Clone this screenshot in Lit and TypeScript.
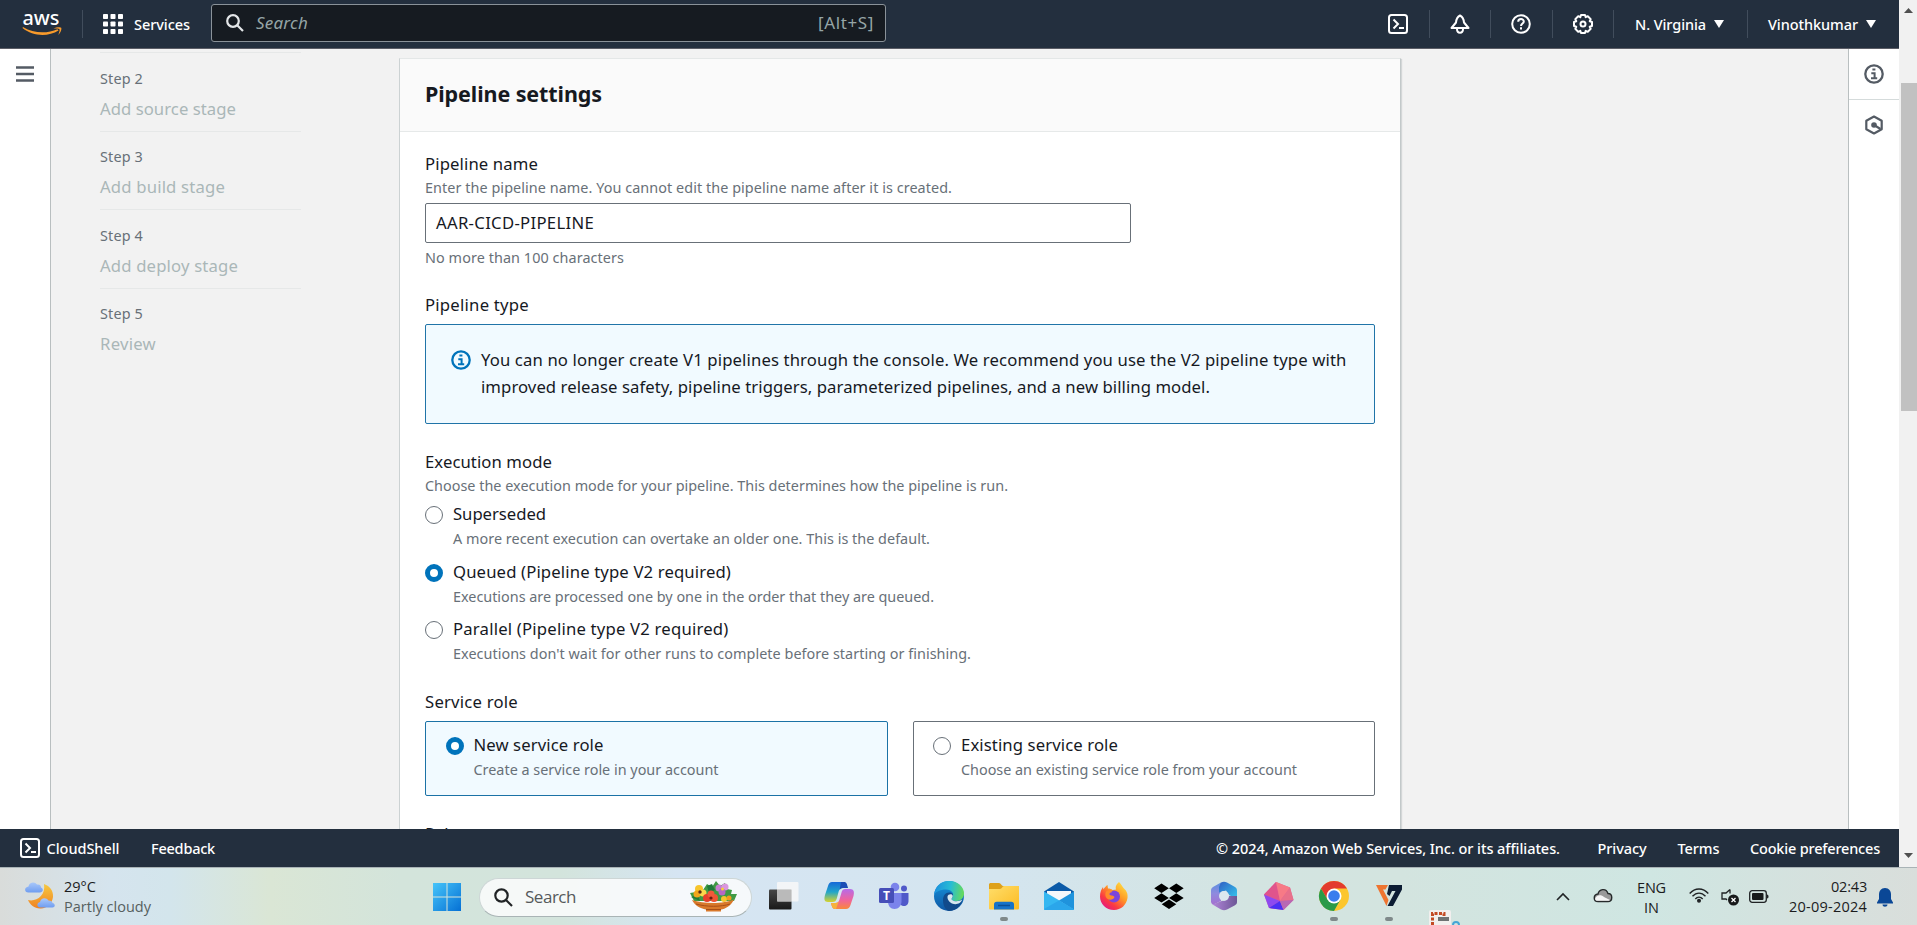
import { LitElement, html, css, svg, nothing } from "lit";
import { customElement, property, query } from "lit/decorators.js";

/** A single line of text whose tracking is tuned so that it spans a given width. */
@customElement("ui-text")
class UiText extends LitElement {
  static styles = css`
    :host { display: block; white-space: nowrap; }
    span { display: inline-block; }
  `;
  @property({ type: Number }) w = 0;
  @property() text = "";
  @query("span") private line!: HTMLSpanElement;

  updated() {
    this.line.style.letterSpacing = "0px";
    const natural = this.line.getBoundingClientRect().width;
    if (this.w && natural) {
      this.line.style.letterSpacing = `${(this.w - natural) / this.text.length}px`;
    }
  }
  render() {
    return html`<span>${this.text}</span>`;
  }
}

const t = (text: string, w: number, cls = "") => html`<ui-text class=${cls} .text=${text} .w=${w}></ui-text>`;

const shellIcon = html`<svg width="20" height="20" viewBox="0 0 20 20" fill="none" stroke="currentColor" stroke-width="2">
  <rect x="1" y="1" width="18" height="18" rx="2.5" /><path d="M5.5 5.5 10 10l-4.500 4.500M11 14h5" /></svg>`;
const infoIcon = html`<svg width="20" height="20" viewBox="0 0 20 20" fill="none" stroke="currentColor" stroke-width="2.300">
  <circle cx="10" cy="10" r="8.700" /><path d="M8.400 5.600h3M7.300 9.300h3.300v5M7 14.200h6.200" stroke-width="2" /></svg>`;
const caret = html`<svg width="10" height="8" viewBox="0 0 10 8"><path d="M0 0h10L5 8z" fill="currentColor" /></svg>`;

@customElement("console-header")
class ConsoleHeader extends LitElement {
  static styles = css`
    :host { display: flex; align-items: center; height: 48px; background: #232f3e; border-bottom: 1px solid #5b5d66; color: #fff;
      font: 500 14.500px/20px "Noto Sans", sans-serif; box-sizing: content-box; }
    svg { display: block; flex: none; }
    .logo { margin: -2px 0 0 22px; width: 40px; overflow: visible; }
    .sep { width: 1px; height: 28px; margin-top: -1px; background: #414d5c; flex: none; }
    .s1 { margin-left: 20px; }
    .grid { margin: -1px 11px 0 20px; }
    .services { width: 77px; margin-top: -1px; }
    .search { display: flex; align-items: center; box-sizing: border-box; width: 675px; height: 38px; margin-bottom: 2px; background: #161b21;
      border: 1px solid #8a9299; border-radius: 3px; padding: 0 11px 0 14px; font-size: 17px; font-weight: 400; color: #95a5a6; }
    .search em { margin-left: 12px; flex: 1; }
    .right { margin-left: auto; display: flex; align-items: center; padding-right: 23px; }
    .ico { width: 20px; padding: 0 20.500px 0 20px; margin: -1px 0 0 0; }
    .ico.first { padding-left: 0; }
    .menu { display: flex; align-items: center; gap: 8px; padding: 0 23px 0 21px; margin-top: -1px; }
    .menu.last { padding: 0 0 0 20px; }
  `;
  render() {
    return html`
      <svg class="logo" width="40" height="30" viewBox="0 0 40 30">
        <text x="0.500" y="16.500" textLength="37" lengthAdjust="spacingAndGlyphs" font-family="Noto Sans" font-weight="500" font-size="20" fill="#fff">aws</text>
        <g transform="translate(0 2)"><path d="M0.500 18C11 26.500 26 27 36.500 20.500l-1-1.300C26 23.500 12 24 1 17z" fill="#f79a2b" />
        <path d="M31.500 18.500c3-1.700 7-1.600 7.700-.8.7 1-.4 5-2.900 7.300 1-3 1.700-5.200 1.200-5.800-.6-.7-3.300-.6-6-.7z" fill="#f79a2b" /></g>
      </svg>
      <div class="sep s1"></div>
      <svg class="grid" width="20" height="20" viewBox="0 0 20 20" fill="#fff">
        ${[0, 7.500, 15].map((y) => [0, 7.500, 15].map((x) => svg`<rect x=${x} y=${y} width="5" height="5" rx=".8" />`))}
      </svg>
      ${t("Services", 56, "services")}
      <div class="search">
        <svg width="18" height="18" viewBox="0 0 18 18" fill="none" stroke="#e4e7e9" stroke-width="2.200"><circle cx="7" cy="7" r="5.800" /><path d="m11 11 6 6" /></svg>
        <em>${t("Search", 52)}</em>
        ${t("[Alt+S]", 56)}
      </div>
      <div class="right">
        <div class="ico first">${shellIcon}</div><div class="sep"></div>
        <div class="ico"><svg width="20" height="20" viewBox="0 0 20 20" fill="none" stroke="#fff" stroke-width="2" stroke-linejoin="round">
          <path d="M10 1.500C7 3 6.300 5 6 8.500L1.500 14h17L14 8.500C13.700 5 13 3 10 1.500z" /><path d="M7 15c0 5 6 5 6 0" /></svg></div><div class="sep"></div>
        <div class="ico"><svg width="20" height="20" viewBox="0 0 20 20" fill="none" stroke="#fff" stroke-width="2">
          <circle cx="10" cy="10" r="8.800" /><path d="M7.200 7.800c0-3.700 5.700-3.500 5.600-.3 0 2-2.800 2-2.800 4.500" /><path d="M10 13.300v2.200" /></svg></div><div class="sep"></div>
        <div class="ico"><svg width="20" height="20" viewBox="0 0 20 20" fill="none" stroke="#fff" stroke-width="2" stroke-linejoin="round">
          <path d="M8 1h4l.7 2.200 2.100-1 2.900 2.900-1 2.100 2.300.8v4l-2.300.8 1 2.100-2.900 2.900-2.100-1L12 19H8l-.7-2.200-2.100 1-2.900-2.900 1-2.100L1 12V8l2.300-.8-1-2.100 2.900-2.900 2.100 1z" /><circle cx="10" cy="10" r="2.500" /></svg></div><div class="sep"></div>
        <div class="menu">${t("N. Virginia", 71)}${caret}</div><div class="sep"></div>
        <div class="menu last">${t("Vinothkumar", 90)}${caret}</div>
      </div>`;
  }
}

@customElement("console-footer")
class ConsoleFooter extends LitElement {
  static styles = css`
    :host { display: flex; align-items: center; box-sizing: border-box; height: 38px; background: #232f3e; color: #fff; padding: 0 19px 0 20px;
      font: 500 14.500px/20px "Noto Sans", sans-serif; }
    svg { display: block; }
    .shell { margin-left: 6.500px; }
    .feedback { margin-left: 31.500px; flex: 1; }
    .links { display: flex; }
    .privacy { margin-left: 37.500px; }
    .terms { margin-left: 31px; }
    .cookie { margin-left: 30.500px; }
  `;
  render() {
    return html`${shellIcon}${t("CloudShell", 73, "shell")}${t("Feedback", 64, "feedback")}
      <div class="links">
        ${t("© 2024, Amazon Web Services, Inc. or its affiliates.", 344)}
        ${t("Privacy", 49, "privacy")}${t("Terms", 42, "terms")}${t("Cookie preferences", 130, "cookie")}
      </div>`;
  }
}

const steps: [string, string, number][] = [
  ["Step 2", "Add source stage", 136],
  ["Step 3", "Add build stage", 125],
  ["Step 4", "Add deploy stage", 138],
  ["Step 5", "Review", 56],
];

@customElement("pipeline-form")
class PipelineForm extends LitElement {
  static styles = css`
    :host { display: block; box-sizing: border-box; width: 1002px; border: 1px solid #e4e7e7; border-left-color: #ccd2d3; border-right-color: #c3c9ca;
      background: #fff; box-shadow: 1px 1px 1px rgba(0, 28, 36, .12); color: #16191f; font: 400 16.700px/28px "Noto Sans", sans-serif; }
    .head { display: flex; align-items: center; height: 73px; box-sizing: border-box; border-bottom: 1px solid #e6e9e9; background: #fafafa; padding: 0 25px 2px;
      font-size: 21.500px; font-weight: 700; }
    .body { padding: 18px 25px 0 25px; }
    .hint { font-size: 14.400px; line-height: 20px; color: #687078; }
    .input { box-sizing: border-box; width: 706px; height: 40px; margin: 5px 0; padding-left: 10px; border: 1px solid #687078; border-radius: 2px; line-height: 38px; }
    .group { margin-top: 23px; }
    .group.g2 { margin-top: 24px; }
    .alert { display: flex; gap: 10px; box-sizing: border-box; height: 100px; margin-top: 5px; padding: 21px 25px; border: 1px solid #2074a8;
      border-radius: 2px; background: #f1faff; line-height: 27.300px; }
    .alert svg { display: block; color: #0073bb; margin-top: 4px; }
    .options { display: grid; row-gap: 8.500px; margin-top: 4px; }
    .option { display: flex; gap: 10px; }
    .option .hint { margin-top: 1px; }
    .dot { box-sizing: border-box; width: 18px; height: 18px; margin-top: 6px; border: 1px solid #687078; border-radius: 50%; background: #fff; flex: none; }
    .dot.on { border: 5.500px solid #0073bb; }
    .tiles { display: grid; grid-template-columns: 1fr 1fr; column-gap: 25px; margin-top: 5px; }
    .tile { box-sizing: border-box; height: 75px; padding: 9px 20px; border: 1px solid #687078; border-radius: 2px; }
    .tile.on { border-color: #1b72a6; background: #f1faff; }
    .tile .option { margin-left: -.5px; }
  `;
  private option(label: string, lw: number, hint: string, hw: number, on = false) {
    return html`<div class="option"><div class="dot ${on ? "on" : ""}"></div><div>${t(label, lw)}${t(hint, hw, "hint")}</div></div>`;
  }
  render() {
    return html`
      <div class="head">${t("Pipeline settings", 177)}</div>
      <div class="body">
        ${t("Pipeline name", 113)}
        ${t("Enter the pipeline name. You cannot edit the pipeline name after it is created.", 527, "hint")}
        <div class="input">${t("AAR-CICD-PIPELINE", 158)}</div>
        ${t("No more than 100 characters", 199, "hint")}
        <div class="group">
          ${t("Pipeline type", 104)}
          <div class="alert">${infoIcon}<div>
            ${t("You can no longer create V1 pipelines through the console. We recommend you use the V2 pipeline type with", 865.5)}
            ${t("improved release safety, pipeline triggers, parameterized pipelines, and a new billing model.", 729)}
          </div></div>
        </div>
        <div class="group g2">
          ${t("Execution mode", 127)}
          ${t("Choose the execution mode for your pipeline. This determines how the pipeline is run.", 583, "hint")}
          <div class="options">
            ${this.option("Superseded", 93, "A more recent execution can overtake an older one. This is the default.", 477)}
            ${this.option("Queued (Pipeline type V2 required)", 278, "Executions are processed one by one in the order that they are queued.", 481, true)}
            ${this.option("Parallel (Pipeline type V2 required)", 275.5, "Executions don't wait for other runs to complete before starting or finishing.", 518)}
          </div>
        </div>
        <div class="group g2">
          ${t("Service role", 93)}
          <div class="tiles">
            <div class="tile on">${this.option("New service role", 130, "Create a service role in your account", 245, true)}</div>
            <div class="tile">${this.option("Existing service role", 157, "Choose an existing service role from your account", 336)}</div>
          </div>
        </div>
        <div class="group g2">${t("Role name", 78)}</div>
      </div>`;
  }
}

const winLogo = svg`<defs><linearGradient id="w" x1="0" y1="0" x2="1" y2="1" gradientUnits="objectBoundingBox"><stop offset="0" stop-color="#46c5fa"/><stop offset="1" stop-color="#0570d4"/></linearGradient></defs>
  <path d="M1 1h13.500v13.500H1zM15.500 1H29v13.500H15.500zM1 15.500h13.500V29H1zM15.500 15.500H29V29H15.500z" fill="url(#w)"/>`;

const flowers = html`<svg width="50" height="32" viewBox="0 0 50 32">
  <path d="M2 12l6-1 1-4 6 2 4-6 5 3 4-6 4 5 5-3 2 6 5 1-1 4 6 0-3 7H6z" fill="#3f9a45"/>
  <path d="M19 5l5-2 3 6-6 3zM3 16l7-2 2 6z" fill="#1f7a3a"/>
  <circle cx="11" cy="8" r="4" fill="#f7c52c"/><circle cx="9" cy="13" r="3.500" fill="#f2a71c"/><circle cx="15" cy="12" r="3.500" fill="#fbd84b"/><circle cx="12" cy="11" r="1.700" fill="#5c2a13"/>
  <circle cx="31" cy="7" r="3.500" fill="#c77fd0"/><circle cx="37" cy="6" r="3.500" fill="#d997dd"/><circle cx="34" cy="11" r="3.500" fill="#b768c4"/><circle cx="34.500" cy="8" r="1.500" fill="#f6d13a"/>
  <circle cx="19" cy="17" r="4" fill="#e6402c"/><circle cx="26" cy="17" r="4" fill="#ee5434"/><circle cx="23" cy="13" r="3.500" fill="#f0593a"/><circle cx="23" cy="17" r="1.600" fill="#6a1a12"/>
  <circle cx="36" cy="18" r="3" fill="#f7c52c"/><circle cx="41" cy="17" r="2.500" fill="#f29b1e"/>
  <path d="M4 19c12 4 32 4 42-.5C43 25 37 28 33 28.500v2H18v-2C12 27 7 25 4 19z" fill="#d9792b"/>
  <path d="M8 23c10 3 25 3 34 0M18 28.500h15" stroke="#a84f18" fill="none"/>
</svg>`;

const apps: { name: string; open?: boolean; art: unknown }[] = [
  { name: "view", art: svg`<defs><linearGradient id="tv" x2="0" y2="1"><stop stop-color="#474747"/><stop offset="1" stop-color="#191919"/></linearGradient></defs>
    <rect x="0" y="8.500" width="22.500" height="20" rx="1" fill="url(#tv)"/><rect x="8" y="1" width="21.500" height="19.500" rx="1" fill="#f7f7f7" opacity=".88"/><path d="M8 8.500h14.500v12H8z" fill="#b0b0b0" opacity=".8"/>` },
  { name: "copilot", art: svg`<defs><linearGradient id="c1" x2="0" y2="1"><stop stop-color="#1769d8"/><stop offset=".5" stop-color="#22a6c9"/><stop offset="1" stop-color="#d8d32c"/></linearGradient>
    <linearGradient id="c2" x2="0" y2="1"><stop stop-color="#b56bea"/><stop offset=".55" stop-color="#f0649c"/><stop offset="1" stop-color="#f9883c"/></linearGradient></defs>
    <path d="M8 1h11c3 0 3.500 2 4.500 6h-5c-2 0-3 1-3.700 3l-2 7.500C12 20 11 21 8.500 21H4C0 21 0 18 1 14L4 5c.8-2.600 2-4 4-4z" fill="url(#c1)"/>
    <path d="M22 28H11.500c-3 0-3.500-2-4.500-6h4.500c2.300 0 3.200-1 3.800-3l2.200-7.500C18 9.300 19 8 21.500 8H26c4 0 4.500 3 3.500 7l-3 9c-.8 2.600-2.200 4-4.500 4z" fill="url(#c2)"/>
    <path d="M17 1h3c2.500 0 3 2 4 6h-5c-2 0-3 1-3.500 2.500z" fill="#1b4db5"/><path d="M7 22h4.500c1.500 0 2.800-.8 3.400-2L12 28c-3 0-4-1.500-5-6z" fill="#f6b23c"/>` },
  { name: "teams", art: svg`<circle cx="16" cy="6" r="4.300" fill="#7b83eb"/><circle cx="25" cy="7.500" r="3" fill="#5059c9"/>
    <path d="M20 12h9.500v8c0 3-2 5-4.500 5s-5-2-5-5z" fill="#5059c9"/><path d="M9 12h13.500v8.500c0 4-3 7.500-7 7.500s-6.500-3-6.500-7.500z" fill="#7b83eb"/>
    <rect x="0" y="7" width="15" height="15" rx="1.500" fill="#464eb8"/><text x="7.500" y="19" text-anchor="middle" font-family="Open Sans" font-weight="700" font-size="12" fill="#fff">T</text>` },
  { name: "edge", art: svg`<defs><linearGradient id="e1" x1="0" x2="1" y1=".3" y2=".4"><stop stop-color="#1c8ede"/><stop offset=".55" stop-color="#28bcd4"/><stop offset="1" stop-color="#66da5b"/></linearGradient>
    <linearGradient id="e2" x2="0" y2="1"><stop stop-color="#1693dc"/><stop offset="1" stop-color="#0f57a4"/></linearGradient></defs>
    <circle cx="15" cy="15" r="15" fill="url(#e2)"/>
    <path d="M0 14C1 5 7 0 15 0c9 0 15 6 15 12.500 0 5-4 7.500-8 7.500-3 0-5.500-1-4-3 3-4 0-8.500-6-8.500C6 8.500 1 11 0 14z" fill="url(#e1)"/>
    <path d="M9 19c0-5 3-8 7-7.500 3 .5 4 3 2 5.500-1.500 2 1 3.500 4 3.500 3.500 0 5.500-1.300 6.500-2.500C28 24 22 30 15 30c-4-1-6-6-6-11z" fill="#114a8b"/>
    <path d="M13.500 15.500c.5-2.500 4.500-3 5.200-.7.5 1.700-2.200 2.700-.5 4.200 2 1.800 7.200 1.600 10-.5-1 4-6 5.500-9.500 4.200-3.200-1.200-5.600-4.200-5.200-7.200z" fill="#d6e7ef"/>` },
  { name: "files", open: true, art: svg`<path d="M0 3.500C0 2.500.8 2 2 2h8c2 0 2.500 3 4 3h14.500c1 0 1.500.5 1.500 1.500V13H0z" fill="#dea11a"/>
    <defs><linearGradient id="f" x2="1" y2="1"><stop stop-color="#ffde6b"/><stop offset="1" stop-color="#fcbb22"/></linearGradient></defs>
    <path d="M0 8h11c2 0 2.500-3 4-3h15v22c0 1-.5 1.500-1.500 1.500h-27C.5 28.500 0 28 0 27z" fill="url(#f)"/>
    <path d="M5 28.500v-5c0-1.700 1-2.700 2.700-2.700h14.600c1.700 0 2.700 1 2.700 2.700v5z" fill="#1673c8"/><path d="M9 24.500h12" stroke="#0b4f94" stroke-width="1.500"/>` },
  { name: "mail", art: svg`<path d="M0 10.500 15 1l15 9.500V15H0z" fill="#0b5aa8"/><path d="M3 10h24v12H3z" fill="#f4f7fa"/>
    <path d="M0 10.500 30 28c0 .6-.6 1-1.200 1H1.200C.6 29 0 28.600 0 28z" fill="#35b7f1"/><path d="M30 10.500 15 19.500l15 9z" fill="#1f93dc"/><path d="M0 28l15-8.500L30 28.500c-.3.4-.7.500-1.200.5H1.200C.6 29 .2 28.600 0 28z" fill="#2ba6ea"/>` },
  { name: "firefox", art: svg`<defs><linearGradient id="ff" x1="1" y1="0" x2=".2" y2="1"><stop stop-color="#fff04a"/><stop offset=".45" stop-color="#ff9a25"/><stop offset=".75" stop-color="#fb3b42"/><stop offset="1" stop-color="#e0148a"/></linearGradient></defs>
    <path d="M20 1c2 2 3 4 4.500 6C28 10 29 13 28.500 17 27.500 24 22 29 15 29 7 29 1 23 1 15.500 1 11 2.500 8 4 6l.5 2.500C5.500 6.500 7 5 8.500 4L9 7.500c2 0 3.500.5 4.500 1.500L17 8.500C16 5 18 3 20 1z" fill="url(#ff)"/>
    <circle cx="15" cy="15.500" r="6" fill="#7b45dc"/><path d="M7 10.500c2.500-1.500 5-1 6.500.5-1.500 0-3.500 1-3 2.500 1 1.500 4 .5 5 2.500-1 3-5 3.500-7.500 1.500C6 16 6 12.500 7 10.500z" fill="#ff8a2b"/>` },
  { name: "dropbox", art: svg`<path d="M7.500 2.500l7.300 4.800-7.300 4.700L.2 7.300zM22.300 2.500l7.400 4.800-7.400 4.700-7.300-4.700zM7.500 12.200l7.300 4.700-7.300 4.700L.2 16.900zM22.300 12.200l7.400 4.700-7.400 4.700-7.300-4.700zM15 18.500l7.300 4.700L15 28l-7.300-4.800z" fill="#000"/>` },
  { name: "m365", art: svg`<defs><linearGradient id="m1" x2="0" y2="1"><stop stop-color="#5a8fe0"/><stop offset=".5" stop-color="#8f8ade"/><stop offset="1" stop-color="#a56fd0"/></linearGradient><linearGradient id="m2" x2="1" y2="1"><stop stop-color="#2f5fc4"/><stop offset="1" stop-color="#35c8ee"/></linearGradient>
    <linearGradient id="m3"><stop stop-color="#b184d8"/><stop offset="1" stop-color="#6c5796"/></linearGradient></defs>
    <path d="M12 1.500 4 6C2.700 7 2 8 2 9.500v11C2 22 3 23 4 23.700L12 20V11z" fill="url(#m1)"/>
    <path d="M12 1.500c2-1 4-1 6 0L26 6c1.400 1 2 2 2 3.500V18l-8-4-3-4.500-7 2V6z" fill="url(#m2)"/>
    <path d="M28 15v6c0 1.500-.7 2.500-2 3.200l-8 4.300c-2 1-4 1-6 0l-8.500-5L14 19.500l6-4.500z" fill="url(#m3)"/>
    <circle cx="15" cy="15" r="5" fill="#dbe8ee"/>` },
  { name: "gem", art: svg`<path d="M12 1 26 6.500 29.500 19 19.500 29 5 27 0 13.500z" fill="#e0609a"/><path d="M12 1 0 13.500 16 20z" fill="#e0548c"/><path d="M12 1 26 6.500 16 20z" fill="#f77a86"/><path d="M26 6.500 29.500 19 16 20z" fill="#e8708a"/><path d="M0 13.500 5 27 16 20z" fill="#8d4af0"/><path d="M5 27 19.500 29 16 20z" fill="#4b30f4"/><path d="M29.500 19 19.500 29 16 20z" fill="#b868b4"/>` },
  { name: "chrome", open: true, art: svg`<circle cx="15" cy="15" r="15" fill="#fcc62d"/><path d="M2 7.500A15 15 0 0 1 28 7.500H15l-6.500 11z" fill="#e33b2e"/><path d="M2 7.500A15 15 0 0 0 15 30l6.500-11.500H8.500z" fill="#2a9a48"/><circle cx="15" cy="15" r="7.500" fill="#fff"/><circle cx="15" cy="15" r="5.800" fill="#3b7ded"/>` },
  { name: "v7", open: true, art: svg`<path d="M2 4h12l-2.500 4.500H9L14.500 19 12.500 25z" fill="#ee7430"/><path d="M15 4h13v4.500L19 25h-5.500l8-15h-3.500l-2.500 5-2.500-2z" fill="#0c1c33"/>` },
];

@customElement("task-bar")
class TaskBar extends LitElement {
  static styles = css`
    :host { display: flex; box-sizing: border-box; height: 58px; border-top: 1px solid #a9b3b6; font: 400 14.500px/20px "Open Sans", sans-serif; color: #1b1c1d;
      background: linear-gradient(90deg, #d9dcda 0, #d5e4ee 110px, #d3e5ec 170px, #dae6d5 270px, #d3e4db 400px, #d3e4dc 560px, #d6e5f3 680px, #d4e5ef 1000px, #d3e4e1 1250px, #d3e4df 1400px, #cfe6e2 1650px, #d9dedb 1917px); overflow: hidden; }
    svg { display: block; flex: none; overflow: visible; }
    .weather { display: flex; gap: 9px; padding: 9px 0 0 25px; width: 432px; box-sizing: border-box; flex: none; }
    .weather svg { margin-top: 4px; }
    .dim { color: #56605f; }
    .start { margin: 14px 17px 0 0; }
    .search { display: flex; align-items: center; box-sizing: border-box; width: 273px; height: 39px; margin: 9.500px 4px 0 0; padding: 0 13px 0 14px; border-radius: 20px; flex: none;
      border: 1px solid #cdd6d6; border-bottom-color: #a9b4b5; background: rgba(251, 253, 253, .85); color: #55595b; font-size: 17px; }
    .search ui-text { margin-left: 12px; flex: 1; }
    .app { display: flex; flex-direction: column; align-items: center; width: 55px; padding-top: 13px; flex: none; }
    .pip { width: 8px; height: 4px; border-radius: 2px; margin-top: 5.500px; background: #7f898a; }
    .snip { margin: 42px 0 0 13px; width: 32px; }
    .tray { margin-left: auto; display: flex; padding-right: 24px; }
    .chev { margin: 25px 23px 0 0; }
    .cloud { margin: 20px 24px 0 0; }
    .lang { text-align: center; margin: 10px 23px 0 0; }
    .wifi { margin: 20px 12px 0 0; }
    .vol { margin: 20px 10px 0 0; }
    .bat { margin: 22px 20px 0 0; }
    .clock { display: flex; flex-direction: column; align-items: flex-end; margin: 8.500px 10px 0 0; }
    .bell { margin-top: 20px; }
  `;
  render() {
    return html`
      <div class="weather">
        <svg width="30" height="29" viewBox="0 0 30 29"><defs><linearGradient id="mo" x2="0" y2="1"><stop stop-color="#f6c93f"/><stop offset="1" stop-color="#f08224"/></linearGradient>
          <linearGradient id="cl" x2="0" y2="1"><stop stop-color="#a9c8fa"/><stop offset="1" stop-color="#6f9df0"/></linearGradient></defs>
          <path d="M19 3c6 2 9.500 7 9 13-1 7-6 11-12 11.500C10 28 5 24 3 19c8 2 18-4 16-16z" fill="url(#mo)"/>
          <path d="M3.500 11.500C-1 11.500-1 6 3.500 5.500 4 1 10 0 12 3.500c3-.5 4 1.500 4 3 3 1 2 5-1 5z" fill="url(#cl)"/>
          <path d="M15.500 26.500c-4 0-4-5-.5-5.500.5-4 6-5.500 8.500-1.500 3 0 4 1.500 4 2.500 3 .5 3 4.500 0 4.500z" fill="url(#cl)"/></svg>
        <div>${t("29°C", 32)}${t("Partly cloudy", 87, "dim")}</div>
      </div>
      <svg class="start" width="30" height="30" viewBox="0 0 30 30">${winLogo}</svg>
      <div class="search">
        <svg width="19" height="19" viewBox="0 0 19 19" fill="none" stroke="#202325" stroke-width="2.200"><circle cx="7.500" cy="7.500" r="6.200"/><path d="m12 12 6 6"/></svg>
        ${t("Search", 51)}
        ${flowers}
      </div>
      ${apps.map((a) => html`<div class="app"><svg width="30" height="30" viewBox="0 0 30 30">${a.art}</svg>${a.open ? html`<div class="pip"></div>` : nothing}</div>`)}
      <svg class="snip" width="32" height="15" viewBox="0 0 32 15"><rect width="22" height="18" rx="2" fill="#f2efee"/>
        <path d="M3.500 15V3.500H15V9" fill="none" stroke="#c34a25" stroke-width="3" stroke-dasharray="3 1.500"/><path d="M9 7h11v4H9z" fill="#6f7273"/><circle cx="27" cy="15" r="3" fill="none" stroke="#44a6d6" stroke-width="2"/></svg>
      <div class="tray">
        <svg class="chev" width="14" height="8" viewBox="0 0 14 8" fill="none" stroke="#202325" stroke-width="1.600"><path d="m1 7 6-6 6 6"/></svg>
        <svg class="cloud" width="20" height="15" viewBox="0 0 20 15"><path d="M5 13.500C0 13.500 0 6.500 5 6c1-5 8-6.500 10 -.5 5 0 5 8 0 8z" fill="#999" stroke="#262a2b" stroke-width="1.400"/><path d="M2 11C3 7 8 6 11 9l6 3c-1 1-2 .8-3 .8H5c-1.500 0-2.500-.5-3-1.800z" fill="#f5f5f5"/></svg>
        <div class="lang">${t("ENG", 29)}${t("IN", 15)}</div>
        <svg class="wifi" width="20" height="15" viewBox="0 0 20 15" fill="none" stroke="#202325" stroke-width="1.400"><path d="M.7 5.500C6-.5 14-.5 19.300 5.500M3.500 8.300c4-4.300 9-4.300 13 0M6.300 11c2.200-2.500 5.200-2.500 7.400 0"/><circle cx="10" cy="12.800" r="1.300" fill="#202325"/></svg>
        <svg class="vol" width="18" height="18" viewBox="0 0 18 18"><path d="M9 1.500v4M9 1.500 5 5H1v6h4l1 1" fill="none" stroke="#202325" stroke-width="1.300"/><circle cx="12.500" cy="12" r="5.500" fill="#17191a"/><path d="m10.500 10 4 4m0-4-4 4" stroke="#fff" stroke-width="1.300"/></svg>
        <svg class="bat" width="20" height="13" viewBox="0 0 20 13"><rect x=".7" y=".7" width="16.600" height="11.600" rx="2.500" fill="none" stroke="#202325" stroke-width="1.300"/><rect x="3" y="3" width="11.500" height="7" rx="1" fill="#17191a"/><path d="M18 4.500c2 0 2 4 0 4z" fill="#202325"/></svg>
        <div class="clock">${t("02:43", 36)}${t("20-09-2024", 78)}</div>
        <svg class="bell" width="16" height="19" viewBox="0 0 16 19"><path d="M8 0c4 0 6 3 6 6.500V11l2 3.500v1H0v-1L2 11V6.500C2 3 4 0 8 0zM5.500 16.500h5c0 3-5 3-5 0z" fill="#0a4796"/></svg>
      </div>`;
  }
}

@customElement("app-root")
class AppRoot extends LitElement {
  static styles = css`
    :host { display: flex; flex-direction: column; width: 1917px; height: 925px; overflow: hidden; font-family: "Noto Sans", sans-serif; }
    .window { display: flex; height: 867px; flex: none; }
    .page { display: flex; flex-direction: column; width: 1899px; }
    .main { display: flex; flex: none; height: 780px; overflow: hidden; background: #f2f2f2; }
    .left { box-sizing: border-box; width: 51px; background: #fff; border-right: 1px solid #b9bfc0; padding: 17px 0 0 16px; flex: none; }
    svg { display: block; }
    .steps { width: 201px; margin: 3px 98px 0 49px; flex: none; }
    .step { box-sizing: border-box; height: 78.600px; border-top: 1px solid #e6e8e8; padding-top: 15.500px; }
    .num { font-size: 14.400px; line-height: 20px; color: #687078; }
    .title { font-size: 16.700px; line-height: 28px; margin-top: 6.200px; color: #aab7b8; }
    pipeline-form { margin-top: 9px; flex: none; height: 900px; }
    .right { box-sizing: border-box; width: 51px; margin-left: auto; background: #fff; border-left: 1px solid #b9bfc0; color: #545b64; }
    .tool { display: flex; justify-content: center; align-items: center; height: 50px; border-bottom: 1px solid #d5dbdb; }
    .tool.last { height: 50px; border: 0; }
    .scroll { display: flex; flex-direction: column; align-items: center; width: 18px; background: #f1f1f1; }
    .up { margin-top: 8px; }
    .thumb { width: 16px; height: 328px; margin: 70px 0 auto 2px; background: #c1c1c1; }
    .down { margin-bottom: 9px; }
  `;
  render() {
    return html`
      <div class="window">
        <div class="page">
          <console-header></console-header>
          <div class="main">
            <div class="left"><svg width="18" height="16" viewBox="0 0 18 16"><path d="M0 1.500h18M0 8h18M0 14.500h18" stroke="#545b64" stroke-width="2.300" /></svg></div>
            <div class="steps">
              ${steps.map(([n, s, w]) => html`<div class="step">${t(n, 43, "num")}${t(s, w, "title")}</div>`)}
            </div>
            <pipeline-form></pipeline-form>
            <div class="right">
              <div class="tool">${infoIcon}</div>
              <div class="tool last"><svg width="20" height="20" viewBox="0 0 20 20" fill="none" stroke="currentColor" stroke-width="2.200"><path d="M10 1.500 17.700 5.700v8.600L10 18.500l-7.700-4.200V5.700z" stroke-linejoin="round" /><circle cx="10" cy="10" r="2.800" fill="currentColor" stroke="none" /><path d="m10 10 6.500 4" /></svg></div>
            </div>
          </div>
          <console-footer></console-footer>
        </div>
        <div class="scroll">
          <svg class="up" width="9" height="5" viewBox="0 0 9 5"><path d="M0 5 4.500 0 9 5z" fill="#505050" /></svg>
          <div class="thumb"></div>
          <svg class="down" width="9" height="5" viewBox="0 0 9 5"><path d="M0 0h9L4.500 5z" fill="#505050" /></svg>
        </div>
      </div>
      <task-bar></task-bar>`;
  }
}
